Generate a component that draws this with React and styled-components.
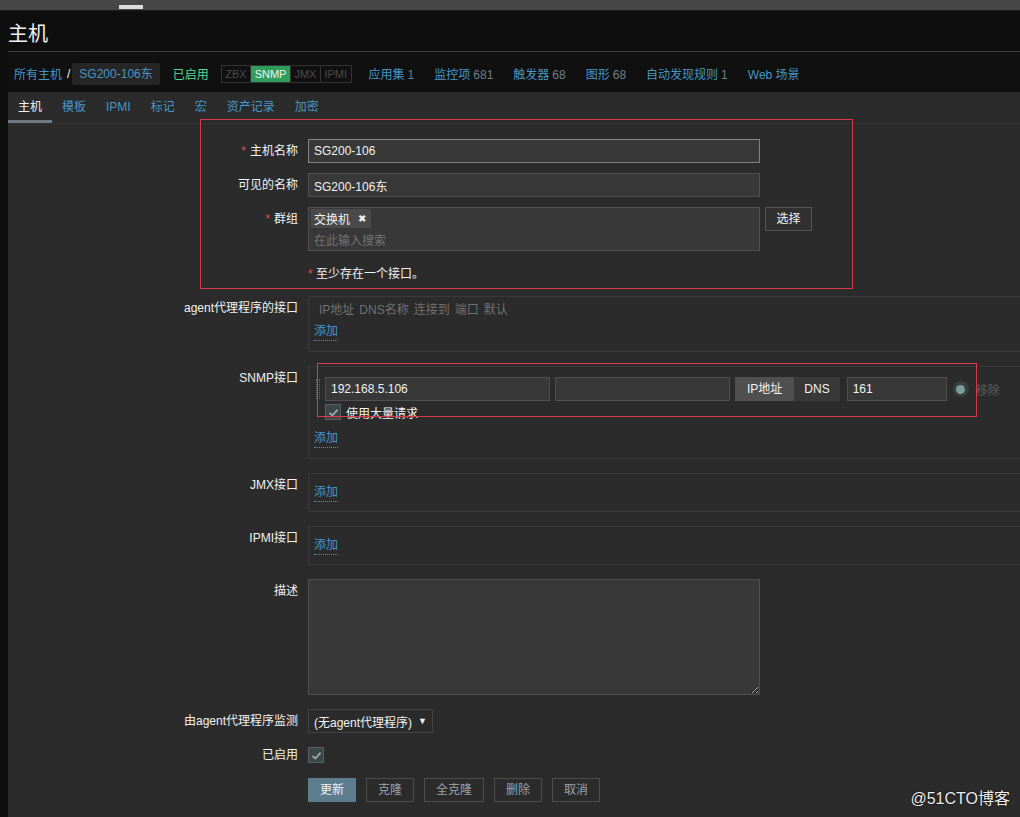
import React from "react";
import styled, { createGlobalStyle } from "styled-components";

const GlobalStyle = createGlobalStyle`
  * { box-sizing: border-box; }
  html, body {
    margin: 0;
    padding: 0;
    background: #0e0e0e;
    overflow: hidden;
  }
  body {
    font-family: Arial, "Liberation Sans", "Noto Sans CJK SC", sans-serif;
    font-size: 12px;
    color: #f2f2f2;
  }
`;

const links = [
  { text: "应用集", count: "1" },
  { text: "监控项", count: "681" },
  { text: "触发器", count: "68" },
  { text: "图形", count: "68" },
  { text: "自动发现规则", count: "1" },
  { text: "Web 场景" },
];

const tabs = ["主机", "模板", "IPMI", "标记", "宏", "资产记录", "加密"];
const agentCols = ["IP地址", "DNS名称", "连接到", "端口", "默认"];
const actions = ["克隆", "全克隆", "删除", "取消"];

function Check() {
  return (
    <CheckBox>
      <svg width="11" height="11" viewBox="0 0 11 11">
        <path d="M1.5 5.8 L4.3 8.5 L9.6 2.6" fill="none" stroke="#9aa9a9" strokeWidth="1.8" />
      </svg>
    </CheckBox>
  );
}

export default function App() {
  return (
    <Page>
      <GlobalStyle />
      <TopStrip>
        <TopTab />
      </TopStrip>

      <HeaderWrap>
        <Header>
          <Title>主机</Title>
        </Header>
        <Nav>
          <NavLink>所有主机</NavLink>
          <Slash>/</Slash>
          <Crumb>SG200-106东</Crumb>
          <Enabled>已启用</Enabled>
          <Status>
            <StatusItem>ZBX</StatusItem>
            <StatusItem $on>SNMP</StatusItem>
            <StatusItem>JMX</StatusItem>
            <StatusItem>IPMI</StatusItem>
          </Status>
          {links.map((l) => (
            <NavItem key={l.text}>
              <NavLink>{l.text}</NavLink>
              {l.count && <Count>{l.count}</Count>}
            </NavItem>
          ))}
        </Nav>
      </HeaderWrap>

      <Main>
        <Tabs>
          {tabs.map((t, i) => (
            <Tab key={t} $active={i === 0}>
              {t}
            </Tab>
          ))}
        </Tabs>

        <Form>
          <Label $required>主机名称</Label>
          <Field>
            <Input $w={452} $focus readOnly value="SG200-106" />
          </Field>

          <Label>可见的名称</Label>
          <Field>
            <Input $w={452} readOnly value="SG200-106东" />
          </Field>

          <Label $required>群组</Label>
          <Field>
            <Multi>
              <Chip>
                交换机 <ChipX>✖</ChipX>
              </Chip>
              <Placeholder>在此输入搜索</Placeholder>
            </Multi>
            <GrayButton>选择</GrayButton>
          </Field>

          <Label />
          <Field>
            <Hint>
              <Star>*</Star> 至少存在一个接口。
            </Hint>
          </Field>

          <Label>agent代理程序的接口</Label>
          <Iface $pad="4px 5px 10px">
            <IfaceHead>
              {agentCols.map((c) => (
                <span key={c}>{c}</span>
              ))}
            </IfaceHead>
            <AddLink $mt={4}>添加</AddLink>
          </Iface>

          <Label>SNMP接口</Label>
          <Iface $pad="10px 5px 10px">
            <SnmpRow>
              <Handle />
              <Input $w={225} readOnly value="192.168.5.106" />
              <Input $w={175} readOnly value="" />
              <Toggle>
                <ToggleItem $on>IP地址</ToggleItem>
                <ToggleItem>DNS</ToggleItem>
              </Toggle>
              <Input $w={100} $ml={2} readOnly value="161" />
              <Radio>
                <RadioDot />
              </Radio>
              <Remove>移除</Remove>
            </SnmpRow>
            <BulkRow>
              <Check />
              使用大量请求
            </BulkRow>
            <AddLink $mt={9}>添加</AddLink>
          </Iface>

          <Label>JMX接口</Label>
          <Iface $pad="10px 5px 9px">
            <AddLink>添加</AddLink>
          </Iface>

          <Label>IPMI接口</Label>
          <Iface $pad="10px 5px 9px">
            <AddLink>添加</AddLink>
          </Iface>

          <Label>描述</Label>
          <Field>
            <TextArea readOnly />
          </Field>

          <Label>由agent代理程序监测</Label>
          <Field>
            <SelectBox>
              (无agent代理程序)
              <Arrow>▼</Arrow>
            </SelectBox>
          </Field>

          <Label>已启用</Label>
          <Field $center>
            <Check />
          </Field>

          <Label />
          <Buttons>
            <PrimaryButton>更新</PrimaryButton>
            {actions.map((a) => (
              <GhostButton key={a}>{a}</GhostButton>
            ))}
          </Buttons>
        </Form>
      </Main>

      <Annotation $x={200} $y={119} $w={653} $h={170} />
      <Annotation $x={317} $y={363} $w={660} $h={54} />
      <Watermark>@51CTO博客</Watermark>
    </Page>
  );
}

const Page = styled.div`
  position: relative;
  width: 100%;
  height: 817px;
  overflow: hidden;
  background: #0e0e0e;
`;

const TopStrip = styled.div`
  height: 11px;
  background: #474747;
  border-bottom: 1px solid #1c1c1c;
  display: flex;
  align-items: flex-end;
  padding-bottom: 1px;
`;

const TopTab = styled.div`
  margin-left: 119px;
  width: 24px;
  height: 4px;
  background: #dcdcdc;
`;

const HeaderWrap = styled.div`
  padding-left: 8px;
`;

const Header = styled.div`
  height: 41px;
  padding-top: 2px;
  display: flex;
  align-items: center;
  border-bottom: 1px solid #3f3f3f;
`;

const Title = styled.h1`
  margin: 0;
  font-size: 20px;
  font-weight: normal;
  color: #f2f2f2;
`;

const Nav = styled.nav`
  height: 40px;
  padding: 3px 0 0 6px;
  display: flex;
  align-items: center;
  background: #101010;
`;

const NavLink = styled.span`
  color: #4796c4;
`;

const NavItem = styled.span`
  margin-right: 20px;
`;

const Count = styled.span`
  color: #6f7f89;
  margin-left: 3px;
`;

const Slash = styled.span`
  color: #f2f2f2;
  margin: 0 2px 0 5px;
`;

const Crumb = styled.span`
  height: 22px;
  line-height: 22px;
  padding: 0 7px;
  background: #262626;
  color: #4796c4;
  border-radius: 2px;
  margin-right: 13px;
`;

const Enabled = styled.span`
  color: #59db8f;
  margin-right: 12px;
`;

const Status = styled.span`
  display: flex;
  height: 18px;
  border: 1px solid #333;
  margin-right: 17px;
`;

const StatusItem = styled.span`
  font-size: 11px;
  line-height: 16px;
  padding: 0 3.5px;
  color: ${(p) => (p.$on ? "#f2f2f2" : "#4b4b4b")};
  background: ${(p) => (p.$on ? "#2f9e5b" : "transparent")};
  border-right: 1px solid #333;
  &:last-child { border-right: none; }
`;

const Main = styled.main`
  margin-left: 8px;
  background: #2b2b2b;
  height: 725px;
`;

const Tabs = styled.div`
  display: flex;
  height: 32px;
  border-bottom: 1px solid #313131;
`;

const Tab = styled.div`
  padding: 2px 10px 0;
  line-height: 26px;
  border-bottom: 3px solid ${(p) => (p.$active ? "#6d7a82" : "transparent")};
  color: ${(p) => (p.$active ? "#f2f2f2" : "#4796c4")};
`;

const Form = styled.div`
  display: grid;
  grid-template-columns: 290px 1fr;
  column-gap: 10px;
  row-gap: 10px;
  padding-top: 15px;
`;

const Label = styled.div`
  text-align: right;
  line-height: 24px;
  white-space: nowrap;
  color: #f2f2f2;
  &::before {
    content: ${(p) => (p.$required ? '"*"' : '""')};
    color: #d8505f;
    margin-right: 4px;
  }
`;

const Field = styled.div`
  display: flex;
  align-items: ${(p) => (p.$center ? "center" : "flex-start")};
  gap: 5px;
  min-height: 24px;
`;

const Input = styled.input`
  width: ${(p) => p.$w}px;
  height: 24px;
  margin-left: ${(p) => p.$ml || 0}px;
  padding: 0 5px;
  background: #383838;
  border: 1px solid ${(p) => (p.$focus ? "#828282" : "#4f4f4f")};
  color: #f2f2f2;
  font: inherit;
  outline: none;
  flex-shrink: 0;
`;

const Multi = styled.div`
  width: 452px;
  height: 44px;
  background: #383838;
  border: 1px solid #4f4f4f;
  padding: 1px 2px;
`;

const Chip = styled.span`
  display: inline-flex;
  align-items: center;
  height: 19px;
  padding: 0 5px 0 3px;
  background: #4a4a4a;
  color: #f2f2f2;
`;

const ChipX = styled.span`
  font-size: 10px;
  margin-left: 8px;
`;

const Placeholder = styled.div`
  color: #737373;
  padding: 3px 0 0 3px;
`;

const GrayButton = styled.div`
  width: 47px;
  height: 24px;
  line-height: 22px;
  text-align: center;
  background: #303030;
  border: 1px solid #555;
  color: #f2f2f2;
`;

const Hint = styled.span`
  line-height: 24px;
  padding-top: 1px;
`;

const Star = styled.span`
  color: #d8505f;
`;

const Iface = styled.div`
  border: 1px solid #393939;
  border-right: none;
  padding: ${(p) => p.$pad};
  margin-bottom: 4px;
`;

const IfaceHead = styled.div`
  display: flex;
  gap: 5px;
  line-height: 18px;
  padding-left: 5px;
  color: #717171;
`;

const AddLink = styled.div`
  display: inline-block;
  margin-top: ${(p) => p.$mt || 0}px;
  line-height: 17px;
  color: #4796c4;
  border-bottom: 1px dotted #4796c4;
`;

const SnmpRow = styled.div`
  display: flex;
  align-items: center;
  gap: 5px;
  height: 24px;
`;

const Handle = styled.div`
  width: 4px;
  height: 20px;
  margin-left: 2px;
  border-left: 1px dotted #6a6a6a;
  border-right: 1px dotted #6a6a6a;
`;

const Toggle = styled.div`
  display: flex;
  height: 24px;
  flex-shrink: 0;
`;

const ToggleItem = styled.div`
  line-height: 24px;
  padding: 0 ${(p) => (p.$on ? "12px" : "10px")};
  background: ${(p) => (p.$on ? "#4f4f4f" : "#383838")};
  color: #f2f2f2;
`;

const Radio = styled.div`
  width: 16px;
  height: 16px;
  margin-left: 1px;
  border-radius: 50%;
  background: #34403f;
  display: flex;
  align-items: center;
  justify-content: center;
  flex-shrink: 0;
`;

const RadioDot = styled.div`
  width: 9px;
  height: 9px;
  border-radius: 50%;
  background: #7f9c9c;
`;

const Remove = styled.span`
  margin-left: 2px;
  color: #5c5c5c;
  white-space: nowrap;
`;

const BulkRow = styled.div`
  display: flex;
  align-items: center;
  gap: 5px;
  height: 18px;
  margin: 2px 0 0 11px;
  color: #f2f2f2;
`;

const CheckBox = styled.span`
  width: 16px;
  height: 16px;
  display: inline-flex;
  align-items: center;
  justify-content: center;
  background: #3d4646;
  border: 1px solid #566060;
`;

const TextArea = styled.textarea`
  width: 452px;
  height: 116px;
  background: #383838;
  border: 1px solid #4f4f4f;
  color: #f2f2f2;
  font: inherit;
  outline: none;
  margin-bottom: 4px;
`;

const SelectBox = styled.div`
  width: 125px;
  height: 24px;
  display: flex;
  align-items: center;
  justify-content: space-between;
  padding: 0 5px;
  background: #2b2b2b;
  border: 1px solid #424242;
  color: #f2f2f2;
  white-space: nowrap;
`;

const Arrow = styled.span`
  font-size: 9px;
`;

const Buttons = styled.div`
  display: flex;
  gap: 10px;
  margin-top: 1px;
`;

const PrimaryButton = styled.div`
  height: 24px;
  line-height: 24px;
  padding: 0 12px;
  background: #5d7c8e;
  color: #f2f2f2;
`;

const GhostButton = styled.div`
  height: 24px;
  line-height: 22px;
  padding: 0 11px;
  border: 1px solid #4c4c4c;
  color: #9aa3a8;
`;

const Annotation = styled.div`
  position: absolute;
  left: ${(p) => p.$x}px;
  top: ${(p) => p.$y}px;
  width: ${(p) => p.$w}px;
  height: ${(p) => p.$h}px;
  border: 1px solid #db3a4c;
  pointer-events: none;
`;

const Watermark = styled.div`
  position: absolute;
  right: 10px;
  bottom: 8px;
  font-size: 16px;
  color: #ececec;
  text-shadow: 0 0 2px #000;
`;
